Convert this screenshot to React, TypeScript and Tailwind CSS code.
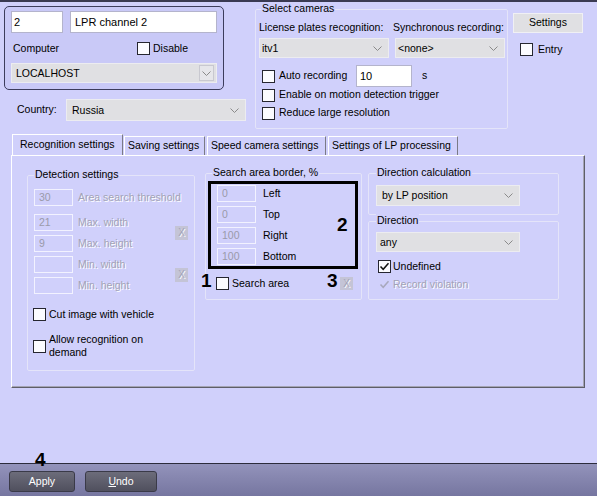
import React from "react";

const BG = "bg-[#d0d0fb]";
const DIS = "text-[#a2a2b6] [text-shadow:1px_1px_0_#ffffff]";

function Chevron() {
  return (
    <svg width="9" height="5" viewBox="0 0 9 5" className="shrink-0">
      <polyline points="0.5,0.5 4.5,4.5 8.5,0.5" fill="none" stroke="#8a8a8a" strokeWidth="1" />
    </svg>
  );
}

function Check({ color = "#111" }: { color?: string }) {
  return (
    <svg width="11" height="11" viewBox="0 0 11 11">
      <polyline points="1.5,5.5 4.2,8.3 9.5,2.2" fill="none" stroke={color} strokeWidth="1.5" />
    </svg>
  );
}

function Box({ checked = false, disabled = false }: { checked?: boolean; disabled?: boolean }) {
  if (disabled) {
    return (
      <span className="w-[13px] h-[13px] shrink-0 flex items-center justify-center">
        {checked && <Check color="#a8a8bc" />}
      </span>
    );
  }
  return (
    <span className="w-[13px] h-[13px] shrink-0 border border-[#262630] bg-[#fbfbff] flex items-center justify-center">
      {checked && <Check />}
    </span>
  );
}

function Combo({ w, h, text, pl, button = false }: { w: string; h: string; text: string; pl: string; button?: boolean }) {
  return (
    <div className={`${w} ${h} ${pl} shrink-0 bg-[#e0e0e3] border border-[#ececf0] flex items-center justify-between`}>
      <span className="leading-none">{text}</span>
      {button ? (
        <span className="w-[15px] h-[16px] mr-[2px] border border-[#c8c8d0] bg-[#e6e6ea] flex items-center justify-center">
          <Chevron />
        </span>
      ) : (
        <span className="mr-[6px] flex items-center">
          <Chevron />
        </span>
      )}
    </div>
  );
}

function Group({ title, cls, titleLeft, children }: { title: string; cls: string; titleLeft: string; children?: React.ReactNode }) {
  return (
    <div className={`relative border border-[#e4e4f9] rounded-[2px] ${cls}`}>
      <span className={`absolute top-[-8px] ${titleLeft} px-[1px] leading-[13px] ${BG} whitespace-nowrap`}>{title}</span>
      {children}
    </div>
  );
}

function DisInput({ v, w = "w-[39px]" }: { v: string; w?: string }) {
  return (
    <div className={`${w} h-[17px] shrink-0 border border-[#f2f2ff] flex items-center pl-[4px] text-[#9a9aaa]`}>
      <span className="leading-none">{v}</span>
    </div>
  );
}

function XBtn() {
  return (
    <div className={`w-[13px] h-[14px] shrink-0 bg-[#c4c4d6] flex items-center justify-center ${DIS}`}>
      <span className="leading-none text-[10px]">X</span>
    </div>
  );
}

export default function App() {
  return (
    <div
      className={`relative w-[597px] h-[496px] ${BG} border-t-2 border-[#3a3a52] flex flex-col overflow-hidden text-[10.5px] text-black`}
      style={{ fontFamily: '"Liberation Sans", Arial, sans-serif' }}
    >
      {/* Top section */}
      <div className="flex h-[131px] shrink-0">
        {/* left column */}
        <div className="ml-[4px] w-[242px] flex flex-col">
          <div className="mt-[4px] w-[220px] h-[84px] border border-[#3c3c5c] rounded-[5px] bg-[#c9c9f7] px-[6px] pt-[4px] flex flex-col">
            <div className="flex gap-[7px]">
              <div className="w-[52px] h-[22px] bg-white border border-[#b4b4cc] flex items-center pl-[2px] text-[11px]">2</div>
              <div className="w-[147px] h-[22px] bg-white border border-[#b4b4cc] flex items-center pl-[4px] text-[11px]">LPR channel 2</div>
            </div>
            <div className="mt-[1px] h-[29px] flex items-center">
              <span className="w-[126px] pl-[2px]">Computer</span>
              <Box />
              <span className="ml-[3px]">Disable</span>
            </div>
            <Combo w="w-[206px]" h="h-[20px]" text="LOCALHOST" pl="pl-[4px]" button />
          </div>
          <div className="mt-[9px] h-[22px] flex items-center">
            <span className="w-[62px] pl-[13px]">Country:</span>
            <Combo w="w-[180px]" h="h-[22px]" text="Russia" pl="pl-[5px]" />
          </div>
        </div>

        {/* Select cameras */}
        <Group title="Select cameras" cls="ml-[9px] mt-[7px] w-[253px] h-[120px] pl-[3px]" titleLeft="left-[5px]">
          <div className="mt-[11px] h-[14px] flex items-center">
            <span className="w-[134px] whitespace-nowrap">License plates recognition:</span>
            <span className="whitespace-nowrap">Synchronous recording:</span>
          </div>
          <div className="mt-[3px] flex gap-[6px]">
            <Combo w="w-[130px]" h="h-[20px]" text="itv1" pl="pl-[2px]" />
            <Combo w="w-[110px]" h="h-[20px]" text="<none>" pl="pl-[2px]" />
          </div>
          <div className="mt-[7px] h-[22px] flex items-center">
            <div className="w-[97px] flex items-center pl-[3px]">
              <Box />
              <span className="ml-[4px] whitespace-nowrap">Auto recording</span>
            </div>
            <div className="w-[56px] h-[22px] bg-white border border-[#b4b4cc] flex items-center pl-[3px] text-[11px]">10</div>
            <span className="ml-[10px]">s</span>
          </div>
          <div className="h-[16px] flex items-center pl-[3px]">
            <Box />
            <span className="ml-[4px] whitespace-nowrap">Enable on motion detection trigger</span>
          </div>
          <div className="mt-[2px] h-[16px] flex items-center pl-[3px]">
            <Box />
            <span className="ml-[4px] whitespace-nowrap">Reduce large resolution</span>
          </div>
        </Group>

        {/* Right column */}
        <div className="ml-[5px] flex flex-col">
          <div className="mt-[11px] w-[70px] h-[20px] bg-[#e0e0e3] border border-[#f0f0f4] flex items-center justify-center">Settings</div>
          <div className="mt-[10px] ml-[7px] h-[13px] flex items-center">
            <Box />
            <span className="ml-[5px]">Entry</span>
          </div>
        </div>
      </div>

      {/* Tabs */}
      <div className="mt-[1px] ml-[11px] w-[574px] flex flex-col shrink-0">
        <div className="h-[21px] flex items-start">
          <div className="ml-[1px] w-[111px] h-[21px] border-l border-t border-white border-r border-r-[#7a7a86] pl-[7px] flex items-center whitespace-nowrap">
            Recognition settings
          </div>
          <div className="ml-[1px] mt-[2px] w-[81px] h-[19px] border-l border-t border-white border-r border-r-[#7a7a86] pl-[3px] flex items-center whitespace-nowrap">
            Saving settings
          </div>
          <div className="ml-[2px] mt-[2px] w-[119px] h-[19px] border-l border-t border-white border-r border-r-[#7a7a86] pl-[3px] flex items-center whitespace-nowrap">
            Speed camera settings
          </div>
          <div className="ml-[2px] mt-[2px] w-[130px] h-[19px] border-l border-t border-white border-r border-r-[#7a7a86] pl-[3px] flex items-center whitespace-nowrap">
            Settings of LP processing
          </div>
        </div>
        <div className="h-[233px] border-l border-t border-white border-r border-b border-r-[#5e5e68] border-b-[#5e5e68] shadow-[inset_-1px_-1px_0_#a4a4b4] flex items-start">
          {/* Detection settings */}
          <Group title="Detection settings" cls="ml-[15px] mt-[19px] w-[168px] h-[196px] pl-[6px] pt-[13px] flex flex-col" titleLeft="left-[6px]">
            <div className="h-[17px] flex items-center">
              <DisInput v="30" />
              <span className={`ml-[5px] whitespace-nowrap ${DIS}`}>Area search threshold</span>
            </div>
            <div className="mt-[8px] flex items-center">
              <div className="w-[141px] flex flex-col gap-[4px]">
                <div className="h-[17px] flex items-center">
                  <DisInput v="21" />
                  <span className={`ml-[5px] ${DIS}`}>Max. width</span>
                </div>
                <div className="h-[17px] flex items-center">
                  <DisInput v="9" />
                  <span className={`ml-[5px] ${DIS}`}>Max. height</span>
                </div>
              </div>
              <XBtn />
            </div>
            <div className="mt-[4px] flex items-center">
              <div className="w-[141px] flex flex-col gap-[4px]">
                <div className="h-[17px] flex items-center">
                  <DisInput v="" />
                  <span className={`ml-[5px] ${DIS}`}>Min. width</span>
                </div>
                <div className="h-[17px] flex items-center">
                  <DisInput v="" />
                  <span className={`ml-[5px] ${DIS}`}>Min. height</span>
                </div>
              </div>
              <XBtn />
            </div>
            <div className="mt-[14px] -ml-[1px] h-[13px] flex items-center">
              <Box />
              <span className="ml-[3px] whitespace-nowrap">Cut image with vehicle</span>
            </div>
            <div className="mt-[12px] -ml-[1px] flex items-center">
              <Box />
              <span className="ml-[3px] leading-[13px]">
                Allow recognition on
                <br />
                demand
              </span>
            </div>
          </Group>

          {/* Search area border */}
          <Group title="Search area border, %" cls="ml-[10px] mt-[17px] w-[157px] h-[127px] pl-[11px] pt-[11px] flex flex-col" titleLeft="left-[6px]">
            <div className="flex flex-col gap-[4px]">
              {[
                ["0", "Left"],
                ["0", "Top"],
                ["100", "Right"],
                ["100", "Bottom"],
              ].map(([v, l]) => (
                <div key={l} className="h-[17px] flex items-center">
                  <DisInput v={v} />
                  <span className="ml-[7px]">{l}</span>
                </div>
              ))}
            </div>
            <div className="mt-[12px] -ml-[1px] h-[13px] flex items-center">
              <Box />
              <span className="ml-[3px] whitespace-nowrap">Search area</span>
              <div className="ml-auto mr-[8px] w-[13px] h-[13px] bg-[#c4c4d6] flex items-center justify-center">
                <span className={`leading-none text-[10px] ${DIS}`}>X</span>
              </div>
            </div>
            {/* annotations */}
            <div className="absolute left-[2px] top-[7px] w-[150px] h-[88px] border-[3px] border-black" />
            <span className="absolute left-[131px] top-[41px] text-[19px] font-bold leading-none">2</span>
            <span className="absolute left-[-5px] top-[97px] text-[19px] font-bold leading-none">1</span>
            <span className="absolute left-[121px] top-[97px] text-[19px] font-bold leading-none">3</span>
          </Group>

          {/* Direction */}
          <div className="ml-[6px] w-[191px] flex flex-col">
            <Group title="Direction calculation" cls="mt-[17px] h-[42px] pl-[7px] pt-[11px]" titleLeft="left-[7px]">
              <Combo w="w-[144px]" h="h-[21px]" text="by LP position" pl="pl-[5px]" />
            </Group>
            <Group title="Direction" cls="mt-[6px] h-[79px] pl-[7px] pt-[10px] flex flex-col" titleLeft="left-[7px]">
              <Combo w="w-[144px]" h="h-[20px]" text="any" pl="pl-[3px]" />
              <div className="mt-[8px] ml-[2px] h-[13px] flex items-center">
                <Box checked />
                <span className="ml-[2px]">Undefined</span>
              </div>
              <div className="mt-[5px] ml-[2px] h-[13px] flex items-center">
                <Box checked disabled />
                <span className={`ml-[2px] ${DIS}`}>Record violation</span>
              </div>
            </Group>
          </div>
        </div>
      </div>

      <div className="flex-1" />

      {/* Bottom bar */}
      <div className="h-[33px] shrink-0 border-t border-[#2c2c3c] bg-gradient-to-b from-[#9393bb] to-[#7676a0] flex items-start">
        <div className="ml-[9px] mt-[7px] w-[66px] h-[21px] rounded-[3px] border border-[#3a3a48] bg-gradient-to-b from-[#6c6c7a] to-[#50505e] text-white flex items-center justify-center">
          Apply
        </div>
        <div className="ml-[10px] mt-[7px] w-[72px] h-[21px] rounded-[3px] border border-[#3a3a48] bg-gradient-to-b from-[#6c6c7a] to-[#50505e] text-white flex items-center justify-center">
          <span>
            <span className="underline">U</span>ndo
          </span>
        </div>
      </div>
      <span className="absolute left-[35px] top-[448px] text-[19px] font-bold leading-none">4</span>
    </div>
  );
}
